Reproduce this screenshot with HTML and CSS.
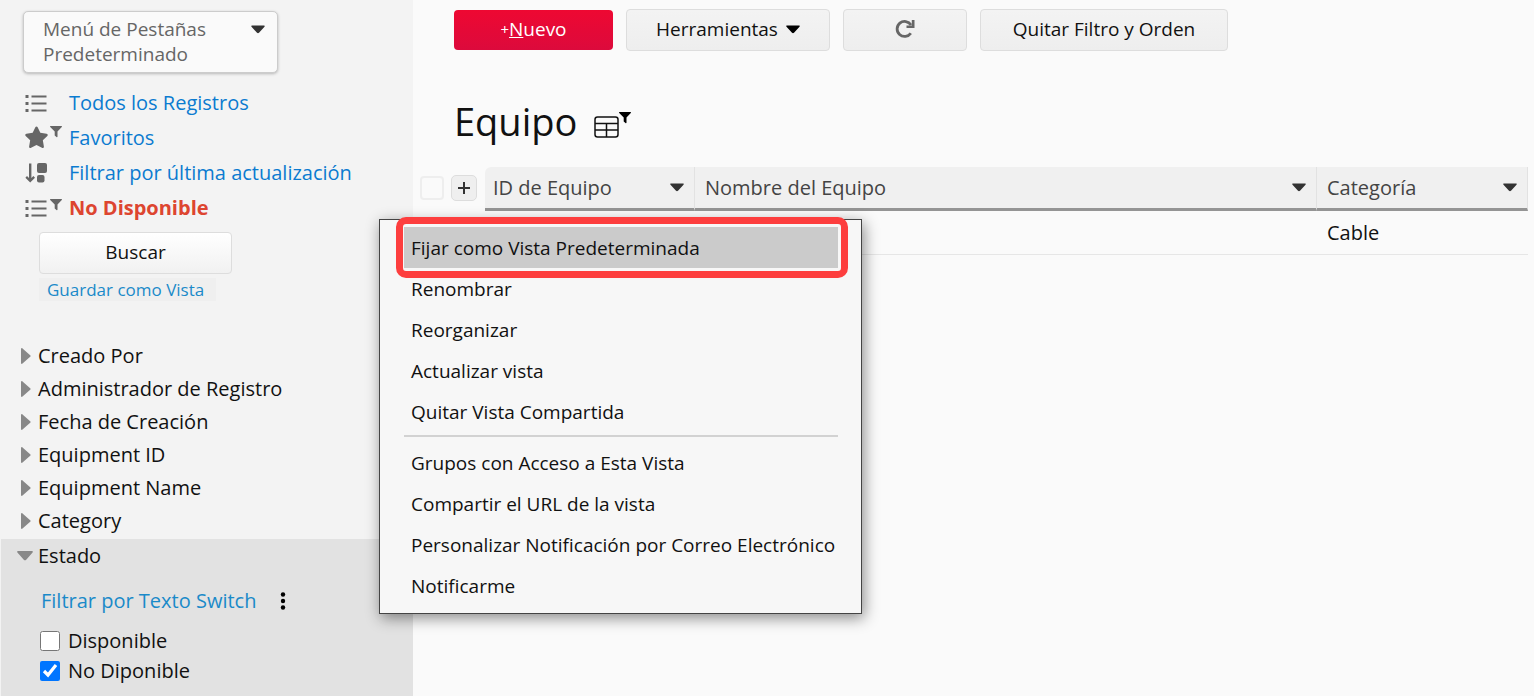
FILE: index.html
```html
<!doctype html>
<html lang="es">
<head>
    <meta charset="utf-8">
    <title>Equipo</title>
    <link rel="stylesheet" href="styles.css">
</head>

<body>
    <!-- shared icons -->
    <svg class="defs" aria-hidden="true">
        <symbol id="caret" viewBox="0 0 14 9"><path d="M1 .5h12c.8 0 1 .7.5 1.200L8 7.800c-.6.600-1.400.600-2 0L.5 1.700C0 1.200.2.500 1 .500z"/></symbol>
        <symbol id="list" viewBox="0 0 22 18"><path d="M0 1h3v3H0zM0 8h3v3H0zM0 15h3v3H0zM6 1.500h15v2H6zM6 8.500h15v2H6zM6 15.500h15v2H6z"/></symbol>
        <symbol id="funnel" viewBox="0 0 12 12"><path d="M.6 0h10.800c.6 0 .8.600.4 1L7.500 5.600v5c0 .600-.6.800-1 .400L4.700 9.400V5.600L.2 1C-.2.600 0 0 .6 0z"/></symbol>
        <symbol id="right" viewBox="0 0 10 16"><path d="M0 1c0-.8.900-1.200 1.500-.6l7.700 6.800c.5.400.5 1.200 0 1.600l-7.700 6.800c-.6.600-1.500.200-1.500-.6z"/></symbol>
    </svg>

    <div class="page">
        <div class="sidebar">
            <button class="tabmenu" type="button">
                <span>Menú de Pestañas Predeterminado</span>
                <svg class="caret" aria-hidden="true"><use href="#caret"/></svg>
            </button>

            <ul class="views">
                <li>
                    <span class="icons"><svg class="list"><use href="#list"/></svg></span>
                    <a href="#">Todos los Registros</a>
                </li>
                <li>
                    <span class="icons">
                        <svg class="star" viewBox="0 0 24 23"><path d="M10.800.900c.5-1 1.900-1 2.400 0l2.800 5.700 6.500 1c1.200.200 1.600 1.500.8 2.300l-4.700 4.500 1.100 6.400c.2 1.200-1 2-2 1.400L12 19.200l-5.700 3c-1 .600-2.200-.2-2-1.400l1.100-6.400L.7 9.900c-.8-.8-.4-2.100.8-2.300l6.500-1z"/></svg>
                        <svg class="funnel"><use href="#funnel"/></svg>
                    </span>
                    <a href="#">Favoritos</a>
                </li>
                <li>
                    <span class="icons">
                        <svg class="sort" viewBox="0 0 22 20"><path d="M4 .500h2.400v14.600l2-2 1.600 1.600-4.800 4.800-4.800-4.800L2 13.100l2 2z"/><rect x="12" width="10" height="10" rx="2"/><rect x="12" y="12" width="7.500" height="7.500" rx="2"/></svg>
                    </span>
                    <a href="#">Filtrar por última actualización</a>
                </li>
                <li>
                    <span class="icons"><svg class="list"><use href="#list"/></svg><svg class="funnel"><use href="#funnel"/></svg></span>
                    <a class="current" href="#">No Disponible</a>
                </li>
            </ul>

            <div class="search">
                <button class="btn" type="button">Buscar</button>
                <a href="#">Guardar como Vista</a>
            </div>

            <ul class="filters">
                <li><svg><use href="#right"/></svg>Creado Por</li>
                <li><svg><use href="#right"/></svg>Administrador de Registro</li>
                <li><svg><use href="#right"/></svg>Fecha de Creación</li>
                <li><svg><use href="#right"/></svg>Equipment ID</li>
                <li><svg><use href="#right"/></svg>Equipment Name</li>
                <li><svg><use href="#right"/></svg>Category</li>
            </ul>

            <div class="open-filter">
                <div class="filter-title"><svg viewBox="0 0 16 10"><path d="M1 0h14c.8 0 1.200.900.6 1.500L9 8.900c-.6.600-1.400.600-2 0L.4 1.500C-.2.900.200 0 1 0z"/></svg>Estado</div>
                <div class="switch">
                    <a href="#">Filtrar por Texto Switch</a>
                    <svg viewBox="0 0 6 18"><circle cx="3" cy="2.500" r="2.200"/><circle cx="3" cy="9" r="2.200"/><circle cx="3" cy="15.500" r="2.200"/></svg>
                </div>
                <label class="check"><input type="checkbox"> Disponible</label>
                <label class="check"><input type="checkbox" checked> No Diponible</label>
            </div>
        </div>

        <div class="main">
            <div class="toolbar">
                <button class="btn new" type="button"><small>+</small><u>N</u>uevo</button>
                <button class="btn tools" type="button">Herramientas <svg class="caret" aria-hidden="true"><use href="#caret"/></svg></button>
                <button class="btn refresh" type="button" aria-label="Recargar">
                    <svg viewBox="0 0 20 20"><path d="M15.800 14.200A7.500 7.500 0 1 1 16 6" fill="none" stroke="#666" stroke-width="2.800"/><path d="M19.500 1v8h-8V6.600h5.300V1z" fill="#666"/></svg>
                </button>
                <button class="btn clear" type="button">Quitar Filtro y Orden</button>
            </div>

            <div class="heading">
                <h1>Equipo</h1>
                <svg class="grid" viewBox="0 0 25 22"><rect x="1" y="1" width="23" height="20" rx="2.500"/><path d="M1 7.500h23M1 14h23M12.500 7.500V21"/></svg>
                <svg class="funnel"><use href="#funnel"/></svg>
            </div>

            <table>
                <thead>
                    <tr>
                        <td class="pick"><input type="checkbox" aria-label="Seleccionar todo"></td>
                        <td class="add"><button type="button" aria-label="Agregar"><svg viewBox="0 0 12 12"><path d="M6 0v12M0 6h12"/></svg></button></td>
                        <th class="id"><div>ID de Equipo<svg class="caret"><use href="#caret"/></svg></div></th>
                        <th><div>Nombre del Equipo<svg class="caret"><use href="#caret"/></svg></div></th>
                        <th class="cat"><div>Categoría<svg class="caret"><use href="#caret"/></svg></div></th>
                    </tr>
                </thead>
                <tbody>
                    <tr>
                        <td></td>
                        <td></td>
                        <td></td>
                        <td></td>
                        <td>Cable</td>
                    </tr>
                </tbody>
            </table>
        </div>

        <!-- context menu of the current view -->
        <div class="menu">
            <button class="active" type="button">Fijar como Vista Predeterminada</button>
            <button type="button">Renombrar</button>
            <button type="button">Reorganizar</button>
            <button type="button">Actualizar vista</button>
            <button type="button">Quitar Vista Compartida</button>
            <hr>
            <button type="button">Grupos con Acceso a Esta Vista</button>
            <button type="button">Compartir el URL de la vista</button>
            <button type="button">Personalizar Notificación por Correo Electrónico</button>
            <button type="button">Notificarme</button>
        </div>
    </div>
</body>
</html>
```

FILE: styles.css
```css
* {
  box-sizing: border-box;
}

body {
  margin: 0;
  background: #fafafa;
  color: #111;
  font: 20px/26px "Open Sans", sans-serif;
}

button {
  font: inherit;
  color: inherit;
}

a {
  color: #0b7bd0;
  text-decoration: none;
}

ul {
  list-style: none;
  margin: 0;
  padding: 0;
}

svg {
  display: block;
  flex: none;
}

.defs {
  position: absolute;
  width: 0;
  height: 0;
}

.page {
  position: relative;
  display: flex;
  min-height: 100vh;
}

.caret {
  width: 14px;
  height: 9px;
}

.funnel {
  width: 12px;
  height: 12px;
}

.btn {
  display: flex;
  align-items: center;
  justify-content: center;
  height: 42px;
  padding: 0 0 2px;
  border: 1px solid #ddd;
  border-radius: 4px;
  background: linear-gradient(#f3f3f3, #eee);
  font-size: 19px;
}

/* sidebar */
.sidebar {
  display: flex;
  flex-direction: column;
  flex: none;
  width: 413px;
  padding-top: 11px;
  background: #f3f3f3;
}

.tabmenu {
  display: flex;
  justify-content: space-between;
  width: 255px;
  margin-left: 23px;
  padding: 5px 12px 5px 19px;
  border: 1px solid #ccc;
  border-radius: 5px;
  background: #fafafa;
  box-shadow: 0 1px 3px rgba(0,0,0,0.25);
  color: #666;
  font-size: 19px;
  line-height: 25px;
  text-align: left;
}

.tabmenu span {
  width: 180px;
}

.tabmenu .caret {
  margin-top: 8px;
  fill: #333;
}

.views {
  margin-top: 12px;
}

.views li {
  display: flex;
  align-items: center;
  height: 35px;
  padding-left: 25px;
}

.icons {
  display: flex;
  align-items: center;
  gap: 2px;
  width: 44px;
  fill: #666;
}

.icons .funnel {
  align-self: flex-start;
}

.list {
  width: 23px;
  height: 18px;
}

.star {
  width: 23px;
  height: 23px;
}

.sort {
  width: 22px;
  height: 20px;
}

.views .current {
  color: #dd4530;
  font-weight: bold;
}

.search {
  display: flex;
  flex-direction: column;
  align-items: flex-start;
  gap: 4px;
  margin: 7px 0 0 39px;
}

.search .btn {
  width: 193px;
  background: linear-gradient(#fff, #f1f1f1);
}

.search a {
  padding: 0 12px 0 8px;
  background: #efefef;
  color: #1a8ac9;
  font-size: 17px;
  line-height: 23px;
}

.filters {
  margin-top: 38px;
}

.filters li,
.filter-title {
  display: flex;
  align-items: center;
  gap: 7px;
  height: 33px;
  padding-left: 21px;
}

.filters svg {
  width: 10px;
  height: 16px;
  fill: #888;
}

.open-filter {
  flex: 1;
  margin: 2px 0 0 1px;
  padding-bottom: 8px;
  background: #e2e2e2;
}

.filter-title {
  gap: 5px;
  padding-left: 16px;
}

.filter-title svg {
  width: 16px;
  height: 10px;
  fill: #888;
}

.switch {
  display: flex;
  align-items: center;
  gap: 24px;
  margin: 16px 0 12px;
  padding-left: 40px;
}

.switch a {
  color: #1a8ac9;
}

.switch svg {
  width: 6px;
  height: 18px;
}

.check {
  display: flex;
  align-items: center;
  gap: 8px;
  height: 30px;
  padding-left: 39px;
}

.check input {
  width: 20px;
  height: 20px;
  margin: 0;
  accent-color: #0075ff;
}

/* main area */
.main {
  flex: 1;
  min-width: 0;
  padding: 9px 6px 0 0;
}

.toolbar {
  display: flex;
  align-items: center;
  gap: 13px;
  padding-left: 41px;
}

.new {
  width: 159px;
  height: 40px;
  border: 0;
  background: linear-gradient(#ee0832, #dc0a3c);
  color: #fff;
}

.new small {
  font-size: 15px;
}

.tools {
  gap: 8px;
  width: 204px;
}

.refresh {
  width: 124px;
}

.refresh svg {
  width: 20px;
  height: 20px;
}

.clear {
  width: 248px;
}

.heading {
  display: flex;
  align-items: center;
  padding: 42px 0 18px 41px;
}

h1 {
  margin: 0 17px 0 0;
  font-size: 38px;
  font-weight: normal;
  line-height: 56px;
}

.grid {
  width: 25px;
  height: 22px;
  margin-top: 12px;
  fill: none;
  stroke: #111;
  stroke-width: 1.500;
}

.heading .funnel {
  margin-bottom: 6px;
}

table {
  width: 100%;
  border-collapse: separate;
  border-spacing: 0;
  table-layout: fixed;
}

td,
th {
  height: 44px;
  padding: 0 10px;
  text-align: left;
}

th {
  border-right: 1px solid #e2e2e2;
  border-bottom: 3px solid #949494;
  background: #f0f0f0;
  color: #444;
  font-weight: normal;
}

th div {
  display: flex;
  align-items: center;
  justify-content: space-between;
}

th .caret {
  fill: #333;
}

tbody td {
  border-bottom: 1px solid #e6e6e6;
}

.pick {
  width: 34px;
  padding: 0 0 2px 7px;
}

.pick input {
  display: block;
  appearance: none;
  width: 24px;
  height: 24px;
  margin: 0;
  border: 2px solid #eee;
  border-radius: 4px;
}

.add {
  width: 38px;
  padding: 0 0 2px 4px;
}

.add button {
  display: grid;
  place-items: center;
  width: 26px;
  height: 26px;
  padding: 0;
  border: 1px solid #ddd;
  border-radius: 5px;
  background: #efefef;
}

.add svg {
  width: 12px;
  height: 12px;
  stroke: #333;
  stroke-width: 2;
}

.id {
  width: 210px;
  padding-left: 8px;
  border-top-left-radius: 6px;
}

.cat {
  width: 211px;
}

/* menu */
.menu {
  position: absolute;
  top: 219px;
  left: 379px;
  width: 483px;
  padding: 7px 23px 7px 24px;
  border: 1px solid #444;
  background: #f7f7f7;
  box-shadow: 2px 4px 14px rgba(0,0,0,0.45);
}

.menu button {
  position: relative;
  display: block;
  width: 100%;
  height: 41px;
  padding: 0 7px;
  border: 0;
  background: none;
  font-size: 19px;
  text-align: left;
  white-space: nowrap;
}

.menu .active {
  background: #cbcbcb;
}

.active::after {
  content: "";
  position: absolute;
  inset: -10px -10px -10px -8px;
  border: 7px solid #fd3e3e;
  border-radius: 10px;
}

hr {
  height: 2px;
  margin: 3px 0 5px;
  border: 0;
  background: #d2d2d2;
}
```
